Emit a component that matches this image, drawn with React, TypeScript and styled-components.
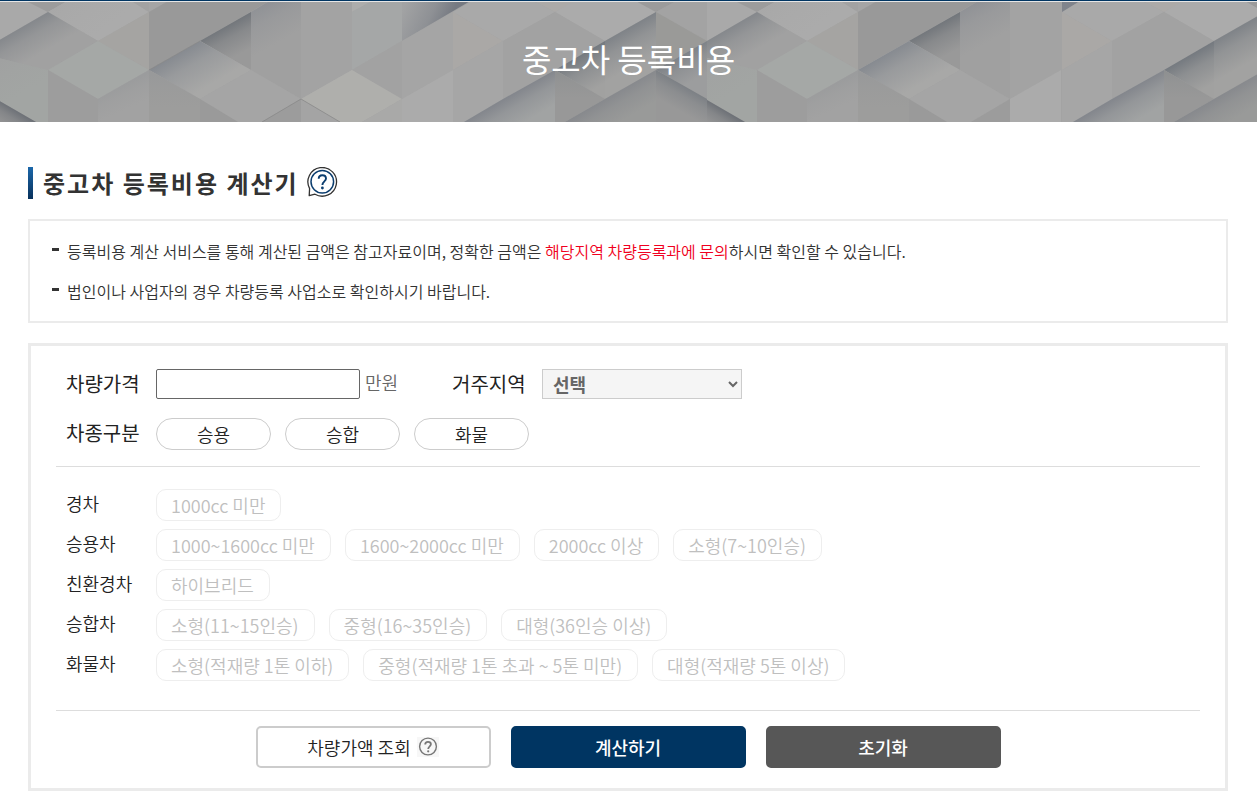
import React, { useState } from "react";
import styled, { createGlobalStyle } from "styled-components";

const GlobalStyle = createGlobalStyle`
  *, *::before, *::after { box-sizing: border-box; }
  body {
    margin: 0;
    background: #fff;
    color: #222;
    font-family: "Noto Sans CJK KR", "Noto Sans", sans-serif;
    font-size: 18px;
  }
  button, input, select { font: inherit; }
`;

type Face = { p: string; c: string; to?: string; v?: [number, number, number, number] };

/* Faces of the banner relief, left part: x from -2 to 352. */
const leftFaces: Face[] = [
  { p: "-2,0 28,0 48,12 -2,41", c: "#a9a9a9" },
  { p: "24,0 70,0 48,12", c: "#9c9c9c" },
  { p: "48,12 69,0 130,0 149,12 98,41", c: "#a8a8a8", to: "#ababab", v: [60, 0, 90, 40] },
  { p: "130,0 149,0 149,12", c: "#a2a2a2" },
  { p: "-2,41 48,12 98,41 48,70 -2,60", c: "#85888c", to: "#a1a1a1", v: [8, 35, 24, 63] },
  { p: "-2,58 48,70 48,122 36,122 -2,100", c: "#a0a1a1", to: "#a2a5a3", v: [0, 60, 20, 95] },
  { p: "-2,100 36,122 -2,122", c: "#6c7076", to: "#989898", v: [18, 111, 6, 130] },
  { p: "98,41 149,12 149,70", c: "#a5a4a2" },
  { p: "48,70 98,41 149,70 98,99", c: "#a5a8a6" },
  { p: "48,70 98,99 98,122 48,122", c: "#9d9d9d" },
  { p: "98,99 149,70 149,122 98,122", c: "#9b9c9d", to: "#a2a2a2", v: [124, 84, 134, 106] },
  { p: "149,0 170,0 149,12", c: "#a5a5a5" },
  { p: "149,12 170,0 271,0 200,41 149,70", c: "#999999" },
  { p: "200,41 251,12 251,70", c: "#72767b", to: "#999999", v: [225, 26, 240, 54] },
  { p: "251,12 271,0 301,0 301,99 251,70", c: "#909296", to: "#a0a0a0", v: [256, 8, 276, 44] },
  { p: "301,0 352,0 352,70 301,99", c: "#a3a3a3" },
  { p: "149,70 200,41 251,70 200,99", c: "#868a90", to: "#a8a8a7", v: [176, 54, 198, 92] },
  { p: "200,99 251,70 301,99 262,122 238,122", c: "#a5a5a5" },
  { p: "149,70 200,99 200,122 149,122", c: "#98999a", to: "#9d9d9c", v: [160, 74, 160, 108] },
  { p: "200,99 238,122 200,122", c: "#9a9a9a" },
  { p: "301,99 301,122 262,122", c: "#9c9c9c" },
  { p: "301,99 352,70 352,122 301,122", c: "#ababab" },
];

/* Right part: x from 352 to 707. */
const rightFaces: Face[] = [
  { p: "352,0 374,0 352,12", c: "#adadac" },
  { p: "352,12 374,0 402,0 402,41 352,70", c: "#a5a7a7" },
  { p: "402,0 472,0 402,41", c: "#767a82", to: "#a2a3a4", v: [450, 18, 408, -2] },
  { p: "352,70 402,41 402,99", c: "#a2a2a2" },
  { p: "402,41 453,12 453,70 402,99", c: "#a5a5a5" },
  { p: "402,99 453,70 453,122 402,122", c: "#ababab" },
  { p: "453,12 503,41 453,70", c: "#aaa8a6" },
  { p: "453,12 474,0 532,0 555,12 503,41", c: "#a9a9a9" },
  { p: "532,0 578,0 555,12", c: "#acaaa8" },
  { p: "555,12 576,0 634,0 656,12 605,41", c: "#ababab" },
  { p: "453,70 503,41 503,99 464,122 453,122", c: "#a6a6a6" },
  { p: "503,41 555,12 605,41 555,70 503,99", c: "#a2a2a2" },
  { p: "634,0 678,0 656,12", c: "#9b9b9b" },
  { p: "656,12 678,0 707,0 707,41", c: "#a3a3a3" },
  { p: "656,12 707,41 656,70", c: "#9a9a98" },
  { p: "605,41 656,12 656,70 605,99", c: "#7e8287", to: "#a2a2a1", v: [630, 26, 648, 58] },
  { p: "555,70 605,41 605,99", c: "#74797f", to: "#a1a1a0", v: [580, 55, 598, 87] },
  { p: "464,122 503,99 555,70 555,122", c: "#84878d", to: "#a1a3a3", v: [510, 96, 525, 122] },
  { p: "555,70 605,99 565,122 555,122", c: "#8e9091", to: "#989898", v: [560, 72, 560, 98] },
  { p: "565,122 605,99 656,70 656,122", c: "#87898d", to: "#999a99", v: [620, 90, 634, 114] },
  { p: "656,70 707,41 707,99", c: "#7e8287", to: "#9c9d9e", v: [680, 56, 694, 80] },
  { p: "656,70 707,99 707,122 656,122", c: "#7c8085", to: "#989898", v: [690, 89, 678, 110] },
];

function Relief({ id, faces }: { id: string; faces: Face[] }) {
  return (
    <g id={id}>
      {faces.map((f, i) => (
        <React.Fragment key={i}>
          {f.v && (
            <linearGradient
              id={`${id}-${i}`}
              gradientUnits="userSpaceOnUse"
              x1={f.v[0]}
              y1={f.v[1]}
              x2={f.v[2]}
              y2={f.v[3]}
            >
              <stop offset="0" stopColor={f.c} />
              <stop offset="0.4" stopColor={f.c} stopOpacity="0.45" />
              <stop offset="1" stopColor={f.c} stopOpacity="0" />
            </linearGradient>
          )}
          <polygon points={f.p} fill={f.to ?? f.c} />
          {f.v && <polygon points={f.p} fill={`url(#${id}-${i})`} />}
        </React.Fragment>
      ))}
    </g>
  );
}

const Banner = styled.header`
  display: grid;
  height: 122px;
  border-top: 1px solid #003562;
  overflow: hidden;
  > * { grid-area: 1 / 1; }
`;
const BannerArt = styled.svg`
  display: block;
  width: 100%;
  height: 121px;
  border-top: 1px solid #e6e6e6;
  background: #a3a3a3;
`;
const BannerTitle = styled.h1`
  z-index: 1;
  margin: 0;
  color: #fff;
  font-size: 32px;
  font-weight: 400;
  line-height: 114px;
  text-align: center;
`;

const Main = styled.main`
  padding: 45px 29px 13px 28px;
`;
const Heading = styled.div`
  display: flex;
  align-items: center;
  gap: 8px;
  height: 32px;
  margin-bottom: 20px;
`;
const Bar = styled.span`
  width: 5px;
  height: 32px;
  margin-right: 2px;
  background: linear-gradient(#1b67aa, #08315b);
`;
const SectionTitle = styled.h2`
  margin: 0;
  color: #333;
  font-size: 24px;
  font-weight: 700;
  letter-spacing: 2px;
  line-height: 32px;
`;
const HelpButton = styled.button`
  display: flex;
  padding: 0;
  border: 0;
  background: none;
  cursor: pointer;
`;

const Notice = styled.ul`
  margin: 0 0 20px;
  padding: 10px 22px;
  border: 2px solid #ebebeb;
  list-style: none;
`;
const NoticeItem = styled.li`
  display: flex;
  align-items: center;
  gap: 8px;
  color: #333;
  font-size: 16px;
  font-weight: 350;
  line-height: 40px;
  &::before {
    content: "";
    flex: none;
    width: 7px;
    height: 3px;
    margin-bottom: 4px;
    background: #333;
  }
`;
const Accent = styled.em`
  color: #f00020;
  font-style: normal;
`;

const Form = styled.form`
  padding: 23px 25px 20px;
  border: 3px solid #ebebeb;
`;
const Section = styled.div<{ $gap: number; $top?: number; $bottom: number }>`
  display: flex;
  flex-direction: column;
  gap: ${(p) => p.$gap}px;
  padding: ${(p) => p.$top ?? 0}px 10px ${(p) => p.$bottom}px;
  border-bottom: 1px solid #ddd;
`;
const Row = styled.div`
  display: flex;
  flex-wrap: wrap;
  align-items: center;
`;
const FieldSet = styled.fieldset`
  display: flex;
  align-items: flex-start;
  min-width: 0;
  margin: 0;
  padding: 0;
  border: 0;
`;
const fieldLabel = `
  flex: none;
  width: 90px;
  color: #222;
  font-size: 20px;
  font-weight: 400;
  line-height: 30px;
`;
const FieldLabel = styled.label`${fieldLabel}`;
const GroupLabel = styled.span`${fieldLabel}`;
const PriceInput = styled.input`
  width: 204px;
  height: 30px;
  padding: 0 8px;
  border: 1px solid #666;
  border-radius: 2px;
`;
const Unit = styled.span`
  align-self: flex-start;
  width: 92px;
  padding-left: 5px;
  color: #666;
  font-weight: 350;
  line-height: 26px;
`;
const RegionSelect = styled.select`
  width: 200px;
  height: 30px;
  padding: 0 0 0 6px;
  border: 1px solid #ccc;
  border-radius: 0;
  background: #f5f5f5;
  color: #666;
  font-weight: 700;
`;
const Options = styled.div`
  display: flex;
  flex-wrap: wrap;
  gap: 8px 14px;
`;
const Pill = styled.button`
  width: 115px;
  height: 32px;
  padding: 0;
  border: 1px solid #ccc;
  border-radius: 16px;
  background: #fff;
  color: #222;
  font-weight: 350;
  line-height: 30px;
  cursor: pointer;
`;
const ClassLabel = styled.span`
  flex: none;
  width: 90px;
  color: #222;
  font-weight: 350;
  line-height: 28px;
`;
const Chip = styled.button`
  height: 32px;
  padding: 0 15px 0 14px;
  border: 1px solid #eee;
  border-radius: 10px;
  background: #fff;
  color: #bfbfbf;
  font-weight: 350;
  line-height: 30px;
`;

const Actions = styled.div`
  display: flex;
  flex-wrap: wrap;
  justify-content: center;
  gap: 20px;
  padding-top: 15px;
`;
const ActionButton = styled.button<{ $fill?: string }>`
  display: flex;
  align-items: center;
  justify-content: center;
  gap: 6px;
  width: 235px;
  height: 42px;
  padding: 0;
  border: 2px solid ${(p) => p.$fill ?? "#ccc"};
  border-radius: 5px;
  background: ${(p) => p.$fill ?? "#fff"};
  color: ${(p) => (p.$fill ? "#fff" : "#222")};
  font-weight: ${(p) => (p.$fill ? 500 : 350)};
  cursor: pointer;
`;
const IconPlate = styled.span`
  display: flex;
  background: #f7f7f7;
`;

const classes = [
  { name: "경차", items: ["1000cc 미만"] },
  { name: "승용차", items: ["1000~1600cc 미만", "1600~2000cc 미만", "2000cc 이상", "소형(7~10인승)"] },
  { name: "친환경차", items: ["하이브리드"] },
  { name: "승합차", items: ["소형(11~15인승)", "중형(16~35인승)", "대형(36인승 이상)"] },
  {
    name: "화물차",
    items: ["소형(적재량 1톤 이하)", "중형(적재량 1톤 초과 ~ 5톤 미만)", "대형(적재량 5톤 이상)"],
  },
];

export default function App() {
  const [price, setPrice] = useState("");
  return (
    <>
      <GlobalStyle />
      <Banner>
        <BannerArt viewBox="0 2 1257 120" preserveAspectRatio="xMidYMid slice" aria-hidden="true">
          <defs>
            <clipPath id="tail">
              <rect x="453" y="0" width="254" height="122" />
            </clipPath>
          </defs>
          <Relief id="left" faces={leftFaces} />
          <Relief id="right" faces={rightFaces} />
          <polygon points="301,99 352,70 402,99 362,122 340,122" fill="#afafac" />
          <polygon points="301,99 340,122 301,122" fill="#a4a4a4" />
          <polygon points="362,122 402,99 402,122" fill="#a9a9a8" />
          <path d="M262 122L301 99L340 122" fill="none" stroke="#858585" strokeWidth="0.7" />
          <path d="M149 70L200 41" fill="none" stroke="#858585" strokeWidth="0.7" />
          <use href="#left" x="709" />
          <g transform="translate(609 0)">
            <use href="#right" clipPath="url(#tail)" />
            <polygon points="453,0 472,0 453,12" fill="#80848c" />
          </g>
        </BannerArt>
        <BannerTitle>중고차 등록비용</BannerTitle>
      </Banner>
      <Main>
        <Heading>
          <Bar />
          <SectionTitle>중고차 등록비용 계산기</SectionTitle>
          <HelpButton type="button" aria-label="도움말">
            <svg width="31" height="32" viewBox="0 1 31 32" fill="none">
              <path
                d="M2.6 22.6A14.3 14.3 0 1 1 8 28.2L2.2 29.6Z"
                stroke="#333"
                strokeWidth="1.3"
                strokeLinejoin="round"
              />
              <circle cx="15.3" cy="15.8" r="11.3" stroke="#0b3d6e" strokeWidth="1.5" />
              <path
                d="M11.7 12.8C11.7 10.4 13.2 9.2 15.3 9.2S19 10.5 19 12.6C19 15.2 15.4 15.6 15.4 18.9"
                stroke="#0b3d6e"
                strokeWidth="1.9"
              />
              <circle cx="15.4" cy="22" r="1.4" fill="#0b3d6e" />
            </svg>
          </HelpButton>
        </Heading>
        <Notice>
          <NoticeItem>
            <span>
              등록비용 계산 서비스를 통해 계산된 금액은 참고자료이며, 정확한 금액은{" "}
              <Accent>해당지역 차량등록과에 문의</Accent>하시면 확인할 수 있습니다.
            </span>
          </NoticeItem>
          <NoticeItem>
            <span>법인이나 사업자의 경우 차량등록 사업소로 확인하시기 바랍니다.</span>
          </NoticeItem>
        </Notice>
        <Form onSubmit={(e) => e.preventDefault()}>
          <Section $gap={19} $bottom={16}>
            <Row>
              <FieldLabel htmlFor="price">차량가격</FieldLabel>
              <PriceInput id="price" value={price} onChange={(e) => setPrice(e.target.value)} />
              <Unit>만원</Unit>
              <FieldLabel htmlFor="region">거주지역</FieldLabel>
              <RegionSelect id="region">
                <option>선택</option>
              </RegionSelect>
            </Row>
            <FieldSet aria-label="차종구분">
              <GroupLabel>차종구분</GroupLabel>
              <Options>
                {["승용", "승합", "화물"].map((t) => (
                  <Pill type="button" key={t}>{t}</Pill>
                ))}
              </Options>
            </FieldSet>
          </Section>
          <Section $gap={8} $top={22} $bottom={29}>
            {classes.map((c) => (
              <FieldSet key={c.name} aria-label={c.name}>
                <ClassLabel>{c.name}</ClassLabel>
                <Options>
                  {c.items.map((t) => (
                    <Chip type="button" disabled key={t}>{t}</Chip>
                  ))}
                </Options>
              </FieldSet>
            ))}
          </Section>
          <Actions>
            <ActionButton type="button">
              차량가액 조회
              <IconPlate>
                <svg width="22" height="20" viewBox="0 0 22 20" fill="none" stroke="#777">
                  <circle cx="11" cy="9.5" r="8.4" strokeWidth="1.4" />
                  <path
                    d="M8.2 7.6C8.2 5.8 9.4 4.9 11 4.9S13.9 5.9 13.9 7.3C13.9 9.3 11.2 9.4 11.2 12"
                    strokeWidth="1.8"
                  />
                  <circle cx="11.2" cy="14.3" r="1.1" fill="#777" stroke="none" />
                </svg>
              </IconPlate>
            </ActionButton>
            <ActionButton type="submit" $fill="#003562">계산하기</ActionButton>
            <ActionButton type="reset" $fill="#575757" onClick={() => setPrice("")}>초기화</ActionButton>
          </Actions>
        </Form>
      </Main>
    </>
  );
}
